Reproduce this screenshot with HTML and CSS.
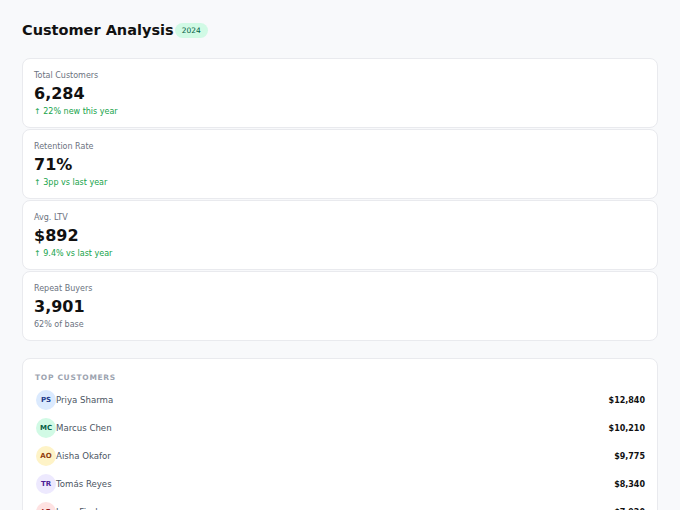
FILE: index.html
```html
<!DOCTYPE html>
<html>
<head>
<meta charset="utf-8">
<link rel="stylesheet" href="styles.css">
</head>
<body>
<div class="page">
  <div class="header">
    <h1 class="title">Customer Analysis</h1>
    <span class="badge">2024</span>
  </div>
  <div class="stats">
    <div class="card">
      <div class="label">Total Customers</div>
      <div class="value">6,284</div>
      <div class="sub up">↑ 22% new this year</div>
    </div>
    <div class="card">
      <div class="label">Retention Rate</div>
      <div class="value">71%</div>
      <div class="sub up">↑ 3pp vs last year</div>
    </div>
    <div class="card">
      <div class="label">Avg. LTV</div>
      <div class="value">$892</div>
      <div class="sub up">↑ 9.4% vs last year</div>
    </div>
    <div class="card">
      <div class="label">Repeat Buyers</div>
      <div class="value">3,901</div>
      <div class="sub">62% of base</div>
    </div>
  </div>
  <div class="panel">
    <div class="panel-title">TOP CUSTOMERS</div>
    <div class="row">
      <span class="avatar a-blue">PS</span>
      <span class="name">Priya Sharma</span>
      <span class="amount">$12,840</span>
    </div>
    <div class="row">
      <span class="avatar a-green">MC</span>
      <span class="name">Marcus Chen</span>
      <span class="amount">$10,210</span>
    </div>
    <div class="row">
      <span class="avatar a-yellow">AO</span>
      <span class="name">Aisha Okafor</span>
      <span class="amount">$9,775</span>
    </div>
    <div class="row">
      <span class="avatar a-purple">TR</span>
      <span class="name">Tomás Reyes</span>
      <span class="amount">$8,340</span>
    </div>
    <div class="row">
      <span class="avatar a-red">LF</span>
      <span class="name">Lena Fischer</span>
      <span class="amount">$7,920</span>
    </div>
  </div>
</div>
</body>
</html>
```

FILE: styles.css
```css
* { box-sizing: border-box; }
html, body { margin: 0; padding: 0; }
body {
  background: #f8f9fb;
  font-family: "DejaVu Sans", Verdana, sans-serif;
  color: #111;
}
.page {
  padding: 21px 22px 22px 22px;
}
.header {
  display: flex;
  align-items: center;
  margin-bottom: 19px;
}
.title {
  margin: 0;
  font-size: 14.5px;
  line-height: 18px;
  font-weight: 700;
  color: #111;
}
.badge {
  background: #d1fae5;
  color: #065f46;
  font-size: 7.5px;
  line-height: 9px;
  padding: 3px 7px;
  border-radius: 10px;
  margin-left: 1px;
}
.stats {
  display: flex;
  flex-direction: column;
  gap: 1px;
  margin-bottom: 17px;
}
.card {
  background: #fff;
  border: 1px solid #e9eaee;
  border-radius: 8px;
  padding: 11px 11px 10px 11px;
  height: 70px;
}
.label {
  font-size: 8px;
  color: #6b7280;
  line-height: 12px;
}
.value {
  font-size: 16px;
  font-weight: 700;
  line-height: 24px;
  color: #111;
}
.sub {
  font-size: 8px;
  line-height: 12px;
  color: #6b7280;
}
.sub.up { color: #16a34a; }
.panel {
  background: #fff;
  border: 1px solid #e9eaee;
  border-radius: 8px;
  padding: 14px 12px 12px 12px;
}
.panel-title {
  font-size: 7.5px;
  line-height: 10px;
  font-weight: 700;
  letter-spacing: 0.7px;
  color: #9ca3af;
  margin-bottom: 3px;
}
.row {
  display: flex;
  align-items: center;
  height: 28px;
}
.avatar {
  width: 20px;
  height: 20px;
  border-radius: 50%;
  display: flex;
  align-items: center;
  justify-content: center;
  font-size: 7px;
  font-weight: 700;
  flex: none;
  margin-left: 1px;
}
.a-blue { background: #dbeafe; color: #1e3a8a; }
.a-green { background: #d1fae5; color: #065f46; }
.a-yellow { background: #fef3c7; color: #92400e; }
.a-purple { background: #ede9fe; color: #4c1d95; }
.a-red { background: #fee2e2; color: #991b1b; }
.name {
  font-size: 8.6px;
  color: #4b5563;
  flex: 1;
}
.amount {
  font-size: 8px;
  font-weight: 700;
  color: #111;
}
```
